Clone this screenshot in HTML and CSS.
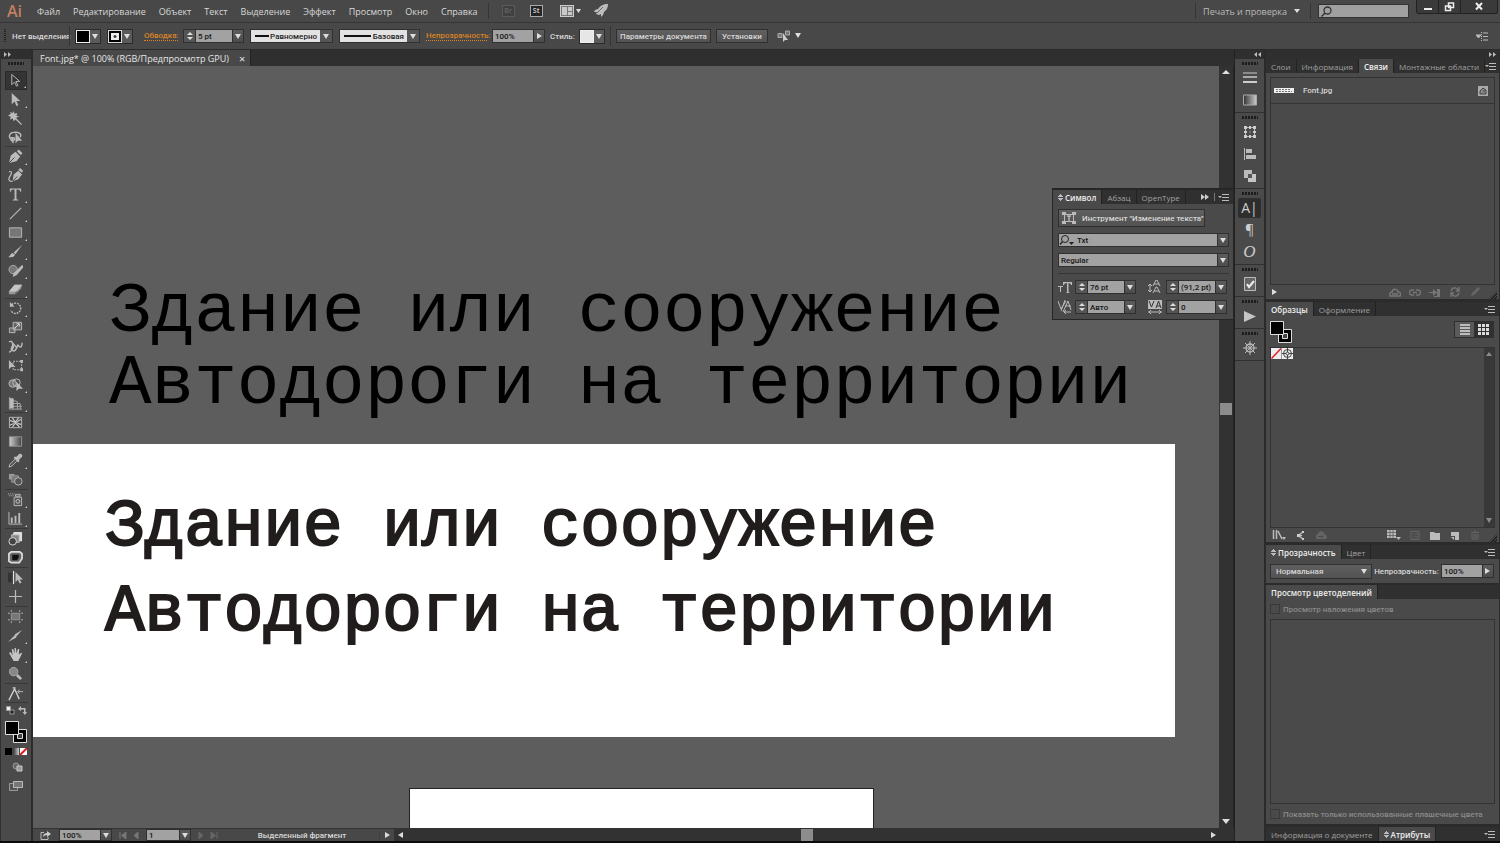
FILE: index.html
```html
<!DOCTYPE html>
<html lang="ru">
<head>
    <meta charset="UTF-8">
    <title>Font.jpg</title>
    <link rel="stylesheet" href="styles.css">
</head>
<body>
<header class="menubar">
    <span class="logo">Ai</span>
    <nav class="menu">
        <a href="#">Файл</a><a href="#">Редактирование</a><a href="#">Объект</a><a href="#">Текст</a><a href="#">Выделение</a><a href="#">Эффект</a><a href="#">Просмотр</a><a href="#">Окно</a><a href="#">Справка</a>
    </nav>
    <i class="vline"></i>
    <button class="app off">Br</button>
    <button class="app">St</button>
    <button class="plain arrange" aria-label="Упорядочить документы">
        <svg width="21" height="12" viewBox="0 0 21 12"><rect x=".5" y=".5" width="13" height="11" fill="#777" stroke="#ccc"/><path d="M2 2h5v8H2zM8 2h4v4H8zM8 7h4v3H8z" fill="#c8c8c8"/><path d="M16 4h5l-2.500 4z" fill="#ddd"/></svg>
    </button>
    <button class="plain" aria-label="Производительность">
        <svg width="15" height="14" viewBox="0 0 15 14"><path d="M14 0C9 0 6 2 4 5L1 6 0 8l3 0-1 2 3 1 2-1v3l2-2 1-3c3-2 4-5 4-8z" fill="#bcbcbc"/><path d="M3 9l6-6" stroke="#666"/></svg>
    </button>
    <div class="grow"></div>
    <i class="vline"></i>
    <button class="plain workspace">Печать и проверка <i class="down small"></i></button>
    <i class="vline"></i>
    <label class="search">
        <svg width="11" height="11" viewBox="0 0 11 11"><circle cx="6.500" cy="4.500" r="3.500" fill="none" stroke="#333" stroke-width="1.300"/><path d="M4 7L.5 10.500" stroke="#333" stroke-width="1.500"/></svg>
        <input type="text" aria-label="Поиск">
    </label>
    <div class="window">
        <button aria-label="Свернуть"><svg width="10" height="10"><path d="M1 6h8v2H1z" fill="#eee"/></svg></button>
        <button aria-label="Развернуть"><svg width="11" height="10"><path d="M4.500 1h5v4.500h-5zM1.500 4h5v4.500h-5z" fill="#333" stroke="#eee" stroke-width="1.500"/></svg></button>
        <button class="close" aria-label="Закрыть"><svg width="10" height="10"><path d="M2 1l6 6.500M8 1L2 7.500" stroke="#eee" stroke-width="2"/></svg></button>
    </div>
</header>

<section class="control">
    <i class="grip-v"></i>
    <span class="none">Нет выделения</span>
    <i class="vline"></i>
    <button class="swatch fill"><b></b><i class="down"></i></button>
    <button class="swatch stroke"><b></b><i class="down"></i></button>
    <a class="orange w-stroke" href="#">Обводка:</a>
    <div class="combo gap-r">
        <button class="spin" aria-label="Шаг"><i class="up"></i><i class="down small"></i></button>
        <input class="w36" type="text" value="5 pt" aria-label="Толщина">
        <button class="arrow" aria-label="Список"><i class="down"></i></button>
    </div>
    <div class="pick gap-r"><select aria-label="Профиль"><option>Равномерно</option></select><i class="line short"></i><i class="cell"><i class="down"></i></i></div>
    <div class="pick gap-r narrow"><select aria-label="Кисть"><option>Базовая</option></select><i class="line"></i><i class="cell"><i class="down"></i></i></div>
    <a class="orange w-opacity" href="#">Непрозрачность:</a>
    <div class="combo">
        <input class="w40" type="text" value="100%" aria-label="Непрозрачность">
        <button class="arrow" aria-label="Ползунок"><i class="right"></i></button>
    </div>
    <span class="style-label">Стиль:</span>
    <button class="swatch light"><b></b><i class="down"></i></button>
    <i class="vline"></i>
    <button class="btn w-doc">Параметры документа</button>
    <button class="btn w-set">Установки</button>
    <button class="plain select-same" aria-label="Выделить похожие">
        <svg width="25" height="12" viewBox="0 0 25 12"><path d="M1 3.500h4v4H1zM8.500 1h4v4h-4z" fill="#777" stroke="#aaa"/><path d="M6 3v9l2-2 3 0z" fill="#ccc"/><path d="M18 3h6l-3 5z" fill="#ddd"/></svg>
    </button>
    <div class="grow"></div>
    <button class="plain bar-menu" aria-label="Меню панели"><svg width="12" height="9"><path d="M0 3h5L2.500 6zM7 1h5M7 4.500h5M7 8h5" fill="#bbb" stroke="#bbb"/><path d="M5.500 0v9" stroke="#bbb" stroke-dasharray="1 1"/></svg></button>
</section>

<main class="workspace-area">
    <aside class="tools">
        <div class="dock-head"><svg width="7" height="5"><path d="M0 0l3 2.500L0 5zM4 0l3 2.500L4 5z" fill="#bbb"/></svg></div>
        <i class="grip"></i>
        <div class="group">
            <button class="tool on more"><svg viewBox="0 0 16 16"><path d="M4 1.500v11l3-3 2 4.500 1.500-.7-2-4.300h4z" fill="#333" stroke="#bbb"/></svg></button>
            <button class="tool more"><svg viewBox="0 0 16 16"><path d="M4 1v12l3-3 2 5 2-1-2-4.500h4z" fill="#bbb"/></svg></button>
            <button class="tool"><svg viewBox="0 0 16 16"><path d="M6 0l1 3 3-1-1 3 3 1-3 1 0 1 6 6-1 1-6-6-2 2-1-3-3 1 1-3-3-1 3-2-1-2 3 1z" fill="#bbb"/></svg></button>
            <button class="tool"><svg viewBox="0 0 16 16"><path d="M4 10C0 8 1 3 6 2.500c6-.8 9 2 7 5M5 8c-3 1-2 5 1 3s-1-4-1-2c0 3 1 3 0 5" fill="none" stroke="#bbb" stroke-width="1.500"/><path d="M8 3v11l2.500-2.500H15z" fill="#bbb"/></svg></button>
        </div>
        <div class="group">
            <button class="tool more"><svg viewBox="0 0 16 16"><path d="M1 15l2-8 5-4 5 5-4 5z" fill="#bbb"/><path d="M9.500 2.500l2-2 4 4-2 2z" fill="#bbb"/><path d="M1 15l6-6" stroke="#444"/></svg></button>
            <button class="tool"><svg viewBox="0 0 16 16"><path d="M5 14l1-7 5-4 4 4-4 5z" fill="#bbb"/><path d="M11 2l2-2 3 3-1 2z" fill="#bbb"/><path d="M5 14l5-5" stroke="#444"/><path d="M1 4c4-1 3 2 1 5s-1 6 3 5" fill="none" stroke="#bbb" stroke-width="1.300"/></svg></button>
            <button class="tool more"><svg viewBox="0 0 16 16"><path d="M2 1.500h12V5h-1c0-2-1-2.300-4-2.300V13l2 .5v1H5v-1l2-.5V2.700C4 2.700 3 3 3 5H2z" fill="#bbb"/></svg></button>
            <button class="tool more"><svg viewBox="0 0 16 16"><path d="M2 14L14 2" stroke="#bbb" stroke-width="1.200"/></svg></button>
            <button class="tool more"><svg viewBox="0 0 16 16"><path d="M1.500 3h13v10h-13z" fill="#777" stroke="#bbb"/></svg></button>
            <button class="tool more"><svg viewBox="0 0 16 16"><path d="M15 1L8 11 6 9zM5 9.500l2.500 2C6 15 3 14 0 14c3-1 2-4 5-4.500z" fill="#bbb"/></svg></button>
            <button class="tool more"><svg viewBox="0 0 16 16"><circle cx="5.500" cy="7" r="4.500" fill="#777" stroke="#aaa"/><path d="M15 2l2 2-8 9-4 2 1-4z" fill="#bbb"/></svg></button>
            <button class="tool more"><svg viewBox="0 0 16 16"><path d="M1 10l6-7h8l-1 4-6 6H1z" fill="#999"/><path d="M1 10l6-7h8l-6 7z" fill="#c5c5c5"/><path d="M9 10l-1 3" stroke="#555"/></svg></button>
        </div>
        <div class="group">
            <button class="tool more"><svg viewBox="0 0 16 16"><path d="M4 4a5.500 5.500 0 1 1-1 6" fill="none" stroke="#bbb" stroke-width="1.500" stroke-dasharray="2 1"/><path d="M2 1v5h5z" fill="#bbb"/></svg></button>
            <button class="tool more"><svg viewBox="0 0 16 16"><path d="M5.500 2.500h9v8h-9zM1.500 8.500h6v5h-6z" fill="#666" stroke="#bbb"/><path d="M7 9l5-5M9 4h3v3" stroke="#ddd" fill="none"/></svg></button>
            <button class="tool more"><svg viewBox="0 0 16 16"><path d="M1 3c4-2 5 3 3 6s3 6 5 1 1-4 3-2 3-1 3-4M3 2l7 8M1 14c2 0 5-4 5-7" fill="none" stroke="#bbb" stroke-width="1.500"/></svg></button>
            <button class="tool"><svg viewBox="0 0 16 16"><path d="M5.500 3.500h9v9h-9z" fill="none" stroke="#bbb" stroke-dasharray="2 1"/><path d="M1 2v10l2.500-2.500H8z" fill="#bbb"/><path d="M13 2h3v3h-3zM13 11h3v3h-3z" fill="#bbb"/></svg></button>
            <button class="tool more"><svg viewBox="0 0 16 16"><circle cx="5" cy="7" r="4" fill="#777" stroke="#bbb"/><circle cx="9" cy="6" r="4" fill="none" stroke="#bbb"/><path d="M9 5v10l2.500-2.500H16z" fill="#bbb"/></svg></button>
            <button class="tool more"><svg viewBox="0 0 16 16"><path d="M1.500 1v13H15M2 4l8 2v8M5 2v12M2 8h11v6M2 11h13" fill="none" stroke="#aaa"/><path d="M2 2l4 1v10H2z" fill="#bbb"/></svg></button>
        </div>
        <div class="group">
            <button class="tool"><svg viewBox="0 0 16 16"><path d="M1.500 2.500h13v11h-13z" fill="#444" stroke="#bbb"/><path d="M2 6c3 0 3 2 6 2s3-3 6-3M5 3c0 3 3 3 3 5s-3 3-3 5M11 3c0 2-3 3-3 5s3 2 4 5M2 11l4-2M10 9l4 1" fill="none" stroke="#ccc" stroke-width="1.300"/></svg></button>
            <button class="tool"><svg viewBox="0 0 16 16"><defs><linearGradient id="g"><stop stop-color="#ccc"/><stop offset="1" stop-color="#444"/></linearGradient><linearGradient id="g2"><stop stop-color="#333"/><stop offset="1" stop-color="#ccc"/></linearGradient></defs><path d="M1.500 3h13v10h-13z" fill="url(#g)" stroke="#999"/></svg></button>
            <button class="tool more"><svg viewBox="0 0 16 16"><path d="M8 6l2 2-6 6-3 1 1-3z" fill="#555" stroke="#bbb"/><path d="M7 4l2 0 3-3c2-1 4 1 3 3l-3 3v2l-1 1-5-5z" fill="#bbb"/></svg></button>
            <button class="tool"><svg viewBox="0 0 16 16"><path d="M1 2h6v6H1z" fill="#999"/><path d="M4 4h7v7H4z" fill="#777" stroke="#999"/><circle cx="11" cy="10" r="4" fill="#555" stroke="#bbb"/></svg></button>
        </div>
        <div class="group loose">
            <button class="tool more"><svg viewBox="0 0 16 16"><path d="M6.500 5.500h8v9h-8zM8 2.500h5v2H8z" fill="#555" stroke="#bbb"/><circle cx="10.500" cy="10" r="2" fill="none" stroke="#ccc"/><path d="M0 2h7M1 4h5" stroke="#bbb" stroke-dasharray="1 1"/></svg></button>
            <button class="tool more"><svg viewBox="0 0 16 16"><path d="M1 1v13h14" fill="none" stroke="#bbb"/><path d="M3 7h2v6H3zM7 5h2v8H7zM11 2h2v11h-2z" fill="#bbb"/></svg></button>
        </div>
        <div class="group loose">
            <button class="tool"><svg viewBox="0 0 16 16"><path d="M6 1h9v10h-4V5H5z" fill="#ddd"/><path d="M4 4h8v8H4z" fill="#888" stroke="#ccc"/><circle cx="5" cy="11" r="4" fill="#444" stroke="#ddd"/></svg></button>
            <button class="tool"><svg viewBox="0 0 16 16"><path d="M3.500 2h9l2.500 2v5l-3 4.500H3.500L1 12V4z" fill="#666" stroke="#ddd" stroke-width="1.800"/><path d="M4.500 5h7v3l-2 3h-5z" fill="#111"/></svg></button>
        </div>
        <div class="group loose">
            <button class="tool"><svg viewBox="0 0 16 16"><path d="M0 3h4v10H0z" fill="#333"/><path d="M6 1v14" stroke="#fff"/><path d="M8 2v11l2.500-2.500 2 4 2-1-2-3.500H16z" fill="#bbb"/></svg></button>
            <button class="tool"><svg viewBox="0 0 16 16"><path d="M8 1v14M1 8h14" stroke="#bbb" stroke-width="1.300"/></svg></button>
        </div>
        <div class="group loose">
            <button class="tool"><svg viewBox="0 0 16 16"><path d="M3.500 4.500h9v7h-9z" fill="#777" stroke="#999"/><path d="M3.500 1v2M12.500 1v2M3.500 13v2M12.500 13v2M0 4.500h2M14 4.500h2M0 11.500h2M14 11.500h2" stroke="#bbb"/></svg></button>
            <button class="tool more"><svg viewBox="0 0 16 16"><path d="M15 2L9 9 7 7zM8 7l1 3-9 5z" fill="#bbb"/></svg></button>
            <button class="tool more"><svg viewBox="0 0 16 16"><path d="M1 6l2-.5L5 9 4 2h1.500L7 7V1h1.500L9 7l1.500-5H12l-.5 6L14 6l1 1-4 8H6z" fill="#c5c5c5"/></svg></button>
            <button class="tool"><svg viewBox="0 0 16 16"><circle cx="6" cy="6" r="4.500" fill="#888" stroke="#aaa"/><path d="M9.500 9.500L14 14" stroke="#bbb" stroke-width="3"/></svg></button>
        </div>
        <div class="group loose">
            <button class="tool"><svg viewBox="0 0 16 16"><path d="M1 15L7 3l5 11M5 2l3 0" fill="none" stroke="#ccc" stroke-width="1.500"/><path d="M16 6h-5M12.500 4L10 6l2.500 2" fill="none" stroke="#bbb"/></svg></button>
        </div>
        <div class="group colors">
            <div class="mini">
                <svg width="9" height="9"><path d="M4 4h4v4H4z" fill="#222" stroke="#999"/><path d="M.5 .5h4v4h-4z" fill="#eee" stroke="#999"/></svg>
                <svg width="9" height="9"><path d="M3 0L0 3l3 2V3.500h3V6H4.500L7 9l2-3H7.500V2H3z" fill="#bbb"/></svg>
            </div>
            <svg width="22" height="22" viewBox="0 0 22 22"><path d="M8.500 8.500h13v13h-13z" fill="#000" stroke="#ddd"/><path d="M12.500 12.500h5v5h-5z" fill="#444" stroke="#ddd"/><path d="M.5 .5h13v13H.5z" fill="#000" stroke="#ddd"/></svg>
            <svg class="modes" width="22" height="7"><path d="M0 0h7v7H0z" fill="#000"/><path d="M8 0h6v7H8z" fill="url(#g2)"/><path d="M15 0h7v7h-7z" fill="#fff"/><path d="M15 7l7-7" stroke="#e02020" stroke-width="2"/></svg>
            <svg class="draw" width="12" height="10"><circle cx="4" cy="4" r="3" fill="#666" stroke="#999"/><path d="M5 4h5v5H5z" fill="#999" stroke="#ccc"/></svg>
            <svg width="14" height="12"><path d="M.5 3.500h8v7h-8z" fill="#555" stroke="#999"/><path d="M4.500 1.500h9v6h-9z" fill="#777" stroke="#bbb"/></svg>
        </div>
    </aside>

    <section class="document">
        <div class="doc-tabs"><div class="doc-tab">Font.jpg* @ 100% (RGB/Предпросмотр GPU)<button class="plain" aria-label="Закрыть">×</button></div></div>
        <div class="view">
            <div class="canvas">
                <p class="art top">Здание или сооружение<br>Автодороги на территории</p>
                <div class="board scan">
                    <p class="art">Здание или сооружение<br>Автодороги на территории</p>
                </div>
                <div class="board empty"></div>
            </div>
            <div class="scroll-v"><i class="up big"></i><i class="thumb"></i><i class="down big"></i></div>
        </div>
        <footer class="status">
            <svg class="share" width="11" height="9"><path d="M4 1.500H1v7h7V6" fill="none" stroke="#bbb"/><path d="M3 6c0-3 2-4 4-4V0l4 3-4 3V4C5 4 4 5 3 6z" fill="#ccc"/></svg>
            <div class="combo">
                <input class="w40" type="text" value="100%" aria-label="Масштаб">
                <button class="arrow" aria-label="Список"><i class="down"></i></button>
            </div>
            <svg class="nav" width="20" height="7"><path d="M1 0v7M7 0L2.500 3.500 7 7zM19 0l-4 3.500L19 7z" fill="#777" stroke="#777"/></svg>
            <div class="combo">
                <input class="w32" type="text" value="1" aria-label="Монтажная область">
                <button class="arrow" aria-label="Список"><i class="down"></i></button>
            </div>
            <svg class="nav" width="20" height="7"><path d="M1 0l4 3.500L1 7zM13 0l4.500 3.500L13 7zM19 0v7" fill="#666" stroke="#666"/></svg>
            <span class="state">Выделенный фрагмент</span>
            <i class="right"></i>
            <div class="scroll-h"><i class="left"></i><i class="thumb"></i><i class="right"></i></div>
        </footer>

        <section class="char">
            <div class="tabs">
                <span class="tab on"><i class="ud"></i>Символ</span><span class="tab">Абзац</span><span class="tab">OpenType</span>
                <div class="grow"></div>
                <svg width="8" height="6"><path d="M0 0l4 3-4 3zM4 0l4 3-4 3z" fill="#ccc"/></svg>
                <i class="vline"></i>
                <svg class="burger" width="11" height="7"><path d="M0 2h4L2 4z" fill="#bbb"/><path d="M4 .5h7M4 3.500h7M4 6.500h7" stroke="#bbb"/></svg>
            </div>
            <div class="char-body">
                <button class="btn touch"><svg width="14" height="12"><path d="M2.500 2.500h9v7h-9z" fill="none" stroke="#bbb"/><path d="M0 0h4v3H0zM10 0h4v3h-4zM0 9h4v3H0zM10 9h4v3h-4z" fill="#bbb"/><path d="M5 4h4M7 4v5" stroke="#ddd"/></svg>Инструмент "Изменение текста"</button>
                <div class="combo wide"><span class="lens"><svg width="15" height="10"><circle cx="6" cy="4" r="3.500" fill="none" stroke="#222"/><path d="M3.500 6.500L1 9.500" stroke="#222" stroke-width="1.300"/><path d="M10 7h5l-2.500 3z" fill="#222"/></svg></span><input type="text" value="Txt" aria-label="Шрифт"><button class="arrow" aria-label="Список"><i class="down"></i></button></div>
                <div class="combo wide"><input type="text" value="Regular" aria-label="Начертание"><button class="arrow" aria-label="Список"><i class="down"></i></button></div>
                <hr>
                <div class="pair">
                    <svg width="14" height="13"><path d="M5 1h9v3h-1c0-1-1-2-2.500-2v9l1.500 1H8l1-1V2C7 2 6 3 6 4H5zM0 5h5v1H3v5H2V6H0z" fill="#bbb"/></svg>
                    <div class="combo"><button class="spin" aria-label="Шаг"><i class="up"></i><i class="down small"></i></button><input class="w36" type="text" value="76 pt" aria-label="Размер"><button class="arrow" aria-label="Список"><i class="down"></i></button></div>
                    <svg width="14" height="14"><path d="M5 6l3-6h1l3 6M6 4h5M5 13l3-6h1l3 6M6 11h5M2 4v8M0 6l2-2 2 2M0 10l2 2 2-2" fill="none" stroke="#bbb"/></svg>
                    <div class="combo"><button class="spin" aria-label="Шаг"><i class="up"></i><i class="down small"></i></button><input class="w36" type="text" value="(91,2 pt)" aria-label="Интерлиньяж"><button class="arrow" aria-label="Список"><i class="down"></i></button></div>
                </div>
                <div class="pair">
                    <svg width="14" height="14"><path d="M0 1l3 8 5-8M5 12l5-11 3 9M7 6h6M7 0L3 11M6 12h7M8 10l-2 2 2 2" fill="none" stroke="#bbb"/></svg>
                    <div class="combo"><button class="spin" aria-label="Шаг"><i class="up"></i><i class="down small"></i></button><input class="w36" type="text" value="Авто" aria-label="Кернинг"><button class="arrow" aria-label="Список"><i class="down"></i></button></div>
                    <svg width="14" height="14"><path d="M0 0h14v9H0z" fill="#bbb"/><path d="M1 1l2.500 6L6 1M8 8l2.500-7L13 8M9 6h3" fill="none" stroke="#333"/><path d="M0 12h14M3 10l-2 2 2 2M11 10l2 2-2 2" fill="none" stroke="#bbb"/></svg>
                    <div class="combo"><button class="spin" aria-label="Шаг"><i class="up"></i><i class="down small"></i></button><input class="w36" type="text" value="0" aria-label="Трекинг"><button class="arrow" aria-label="Список"><i class="down"></i></button></div>
                </div>
            </div>
        </section>
    </section>

    <aside class="strip">
        <div class="dock-head end"><svg width="7" height="5"><path d="M3 0L0 2.500 3 5zM7 0L4 2.500 7 5z" fill="#bbb"/></svg></div>
        <div class="strip-group"><i class="grip"></i>
            <button><svg viewBox="0 0 14 14"><path d="M0 2h14" stroke="#ccc"/><path d="M0 6h14" stroke="#ccc" stroke-width="1.500"/><path d="M0 11h14" stroke="#ccc" stroke-width="2"/></svg></button>
            <button><svg viewBox="0 0 14 14"><path d="M.5 2h13v10H.5z" fill="url(#g2)" stroke="#aaa"/></svg></button>
        </div>
        <div class="strip-group"><i class="grip"></i>
            <button><svg viewBox="0 0 14 14"><path d="M2.500 2.500h9v9h-9z" fill="none" stroke="#bbb"/><path d="M1 1h3v3H1zM6 1h2v3H6zM10 1h3v3h-3zM1 6h3v2H1zM10 6h3v2h-3zM1 10h3v3H1zM6 10h2v3H6zM10 10h3v3h-3zM6.500 6.500h1v1h-1z" fill="#ccc"/></svg></button>
            <button><svg viewBox="0 0 14 14"><path d="M1.500 1v12" stroke="#bbb"/><path d="M3 2h6v4H3zM3 8h10v4H3z" fill="#bbb"/></svg></button>
            <button><svg viewBox="0 0 14 14"><path d="M1 1h8v8H1z" fill="#bbb"/><path d="M5 5h8v8H5z" fill="#c5c5c5"/><path d="M5 5h4v4H5z" fill="#555"/></svg></button>
        </div>
        <div class="strip-group"><i class="grip"></i>
            <button class="on"><span class="glyph">A|</span></button>
            <button><span class="glyph">¶</span></button>
            <button><span class="glyph italic">O</span></button>
        </div>
        <div class="strip-group"><i class="grip"></i>
            <button><svg viewBox="0 0 14 14"><path d="M1.500 .5h11v13h-11z" fill="#666" stroke="#bbb"/><path d="M4 7l2 3 5-6" fill="none" stroke="#eee" stroke-width="2"/></svg></button>
        </div>
        <div class="strip-group"><i class="grip"></i>
            <button><svg viewBox="0 0 14 14"><path d="M1 2l12 5.500L1 13z" fill="#c5c5c5"/></svg></button>
        </div>
        <div class="strip-group last"><i class="grip"></i>
            <button><svg viewBox="0 0 14 14"><circle cx="7" cy="7" r="4" fill="none" stroke="#bbb" stroke-width="1.300"/><path d="M7 0v14M0 7h14M2 2l10 10M12 2L2 12" stroke="#bbb"/></svg></button>
        </div>
    </aside>

    <aside class="panels">
        <div class="dock-head end"><svg width="7" height="5"><path d="M0 0l3 2.500L0 5zM4 0l3 2.500L4 5z" fill="#bbb"/></svg></div>
        <section class="panel links">
            <div class="tabs"><span class="tab">Слои</span><span class="tab">Информация</span><span class="tab on">Связи</span><span class="tab">Монтажные области</span><div class="grow"></div><svg class="burger" width="11" height="7"><path d="M0 2h4L2 4z" fill="#bbb"/><path d="M4 .5h7M4 3.500h7M4 6.500h7" stroke="#bbb"/></svg></div>
            <div class="box link-list">
                <div class="link-row">
                    <svg width="20" height="5"><path d="M0 0h20v5H0z" fill="#eee"/><path d="M2 1.500h15M2 3.500h16" stroke="#777" stroke-dasharray="2 1"/></svg>
                    <span>Font.jpg</span>
                    <svg width="10" height="10"><path d="M0 0h10v10H0z" fill="#aaa"/><path d="M2 5l3-3 3 2v4H2zM5 5h2" fill="#888" stroke="#444"/></svg>
                </div>
            </div>
            <div class="foot">
                <i class="right"></i><div class="grow"></div>
                <svg width="12" height="9"><path d="M1 8c-1-4 2-4 2-4 1-4 6-3 6 0 3 0 3 3 2 4zM3 6h6" fill="none" stroke="#777" stroke-width="1.500"/></svg>
                <svg width="12" height="9"><path d="M5 2H3a2 2 0 0 0 0 5h2M7 2h2a2 2 0 0 1 0 5H7M4 4.500h4" fill="none" stroke="#777" stroke-width="1.300"/></svg>
                <svg width="12" height="9"><path d="M0 4h4V1l4 3.500L4 8V5H0zM8 1h3v8H5V8h3z" fill="#777"/></svg>
                <svg width="12" height="10"><path d="M2 4c1-4 6-4 7-1M10 6c-1 4-6 4-7 1M10 0v4H7M2 10V6h3" fill="none" stroke="#777" stroke-width="1.300"/></svg>
                <svg width="12" height="10"><path d="M2 9l1-3 6-6 2 2-6 6z" fill="#666"/></svg>
                <i class="corner"></i>
            </div>
        </section>

        <section class="panel swatches">
            <div class="tabs"><span class="tab on">Образцы</span><span class="tab">Оформление</span><div class="grow"></div><svg class="burger" width="11" height="7"><path d="M0 2h4L2 4z" fill="#bbb"/><path d="M4 .5h7M4 3.500h7M4 6.500h7" stroke="#bbb"/></svg></div>
            <div class="swatch-top">
                <svg width="22" height="22" viewBox="0 0 22 22"><path d="M8.500 8.500h13v13h-13z" fill="#000" stroke="#ddd"/><path d="M12.500 12.500h5v5h-5z" fill="#444" stroke="#ddd"/><path d="M.5 .5h13v13H.5z" fill="#000" stroke="#ddd"/></svg>
                <div class="views">
                    <button aria-label="Список"><svg width="10" height="11"><path d="M0 1h10M0 4h10M0 7h10M0 10h10" stroke="#ddd" stroke-width="1.500"/></svg></button><button class="on" aria-label="Миниатюры"><svg width="11" height="11"><path d="M0 0h3v3H0zM4 0h3v3H4zM8 0h3v3H8zM0 4h3v3H0zM4 4h3v3H4zM8 4h3v3H8zM0 8h3v3H0zM4 8h3v3H4zM8 8h3v3H8z" fill="#ddd"/></svg></button>
                </div>
            </div>
            <div class="box swatch-list">
                <svg width="22" height="11"><path d="M0 0h22v11H0z" fill="#eee"/><path d="M.5 10.500L10 .5" stroke="#e02020" stroke-width="1.500"/><path d="M10.500 0v11" stroke="#999"/><circle cx="16.500" cy="5.500" r="4" fill="none" stroke="#444"/><path d="M16.500 0v11M11 5.500h11" stroke="#444"/><circle cx="16.500" cy="5.500" r="1.500" fill="#eee" stroke="#444"/></svg>
                <div class="bar"><i class="up dim"></i><i class="down dim"></i></div>
            </div>
            <div class="foot">
                <svg width="15" height="10"><path d="M1.500 0v9M4.500 0v9M6 1l4 8" stroke="#bbb" stroke-width="1.500"/><path d="M10 7h4l-2 3z" fill="#bbb"/></svg>
                <svg width="12" height="9"><path d="M8 1L3 4.500 8 8M3 4.500h4" fill="none" stroke="#bbb" stroke-width="1.300"/><path d="M7 0h2v2H7zM7 7h2v2H7zM2 3h3v3H2z" fill="#ccc"/></svg>
                <svg width="12" height="9"><path d="M2 8C-1 5 2 3 3 3c1-4 6-3 6 0 3 0 4 5 1 5z" fill="#666"/><path d="M3 5.500h5M6 3.500l2 2-2 2" fill="none" stroke="#4a4a4a"/></svg>
                <div class="grow"></div>
                <svg width="14" height="10"><path d="M0 0h9v8H0z" fill="#bbb"/><path d="M3 0v8M6 0v8M0 2.500h9M0 5.500h9" stroke="#555" stroke-width=".7"/><path d="M9 7h5l-2.500 3z" fill="#bbb"/></svg>
                <svg width="12" height="9"><path d="M2 .5h8v8H2zM4 3h1M6 3h3M4 6h1M6 6h3" fill="none" stroke="#666"/></svg>
                <svg width="12" height="9"><path d="M1 1h4l1 1h5v7H1z" fill="#bbb"/></svg>
                <svg width="12" height="9"><path d="M2 1h8v8H6V5H2z" fill="#bbb"/><path d="M2 6h3v3z" fill="#bbb"/></svg>
                <svg width="12" height="10"><path d="M2 2.500h8M5 1h2M3 4v5h6V4M5 4v4M7 4v4" fill="none" stroke="#666"/></svg>
                <i class="corner"></i>
            </div>
        </section>

        <section class="panel transparency">
            <div class="tabs"><span class="tab on"><i class="ud"></i>Прозрачность</span><span class="tab">Цвет</span><div class="grow"></div><svg class="burger" width="11" height="7"><path d="M0 2h4L2 4z" fill="#bbb"/><path d="M4 .5h7M4 3.500h7M4 6.500h7" stroke="#bbb"/></svg></div>
            <div class="trans-row">
                <div class="mode"><select aria-label="Режим наложения"><option>Нормальная</option></select><i class="down"></i></div>
                <label for="op">Непрозрачность:</label>
                <div class="combo"><input id="op" class="w40" type="text" value="100%"><button class="arrow" aria-label="Ползунок"><i class="right"></i></button></div>
            </div>
        </section>

        <section class="panel separations">
            <div class="tabs"><span class="tab on">Просмотр цветоделений</span></div>
            <label class="check"><input type="checkbox" disabled>Просмотр наложения цветов</label>
            <div class="box ink-list"></div>
            <label class="check"><input type="checkbox" disabled>Показать только использованные плашечные цвета</label>
        </section>

        <section class="panel attrs">
            <div class="tabs"><span class="tab">Информация о документе</span><span class="tab on"><i class="ud"></i>Атрибуты</span><div class="grow"></div><svg class="burger" width="11" height="7"><path d="M0 2h4L2 4z" fill="#bbb"/><path d="M4 .5h7M4 3.500h7M4 6.500h7" stroke="#bbb"/></svg></div>
        </section>
    </aside>
</main>
</body>
</html>
```
FILE: styles.css
```css
*{
    box-sizing: border-box;
}
body{
    margin: 0;
    height: 100vh;
    display: flex;
    flex-direction: column;
    overflow: hidden;
    background: #484848;
    border-bottom: 2px solid #0c0a0b;
    color: #d8d8d8;
    font-family: Roboto, "Open Sans", sans-serif;
    font-size: 8px;
    font-weight: 500;
}
button, input, select{
    margin: 0;
    padding: 0;
    border: 0;
    border-radius: 0;
    font: inherit;
    color: inherit;
    background: none;
}
a{
    color: inherit;
    text-decoration: none;
}
svg{
    display: block;
    flex: none;
}
i{
    display: block;
    flex: none;
}
.grow{
    flex: 1;
}
.vline{
    width: 1px;
    height: 20px;
    background: #353535;
}
.plain{
    display: flex;
    align-items: center;
}

/* arrows */
.down, .up, .right, .left{
    width: 0;
    height: 0;
    border: 3px solid transparent;
}
.down{
    border-top: 5px solid #ddd;
    border-bottom: 0;
}
.up{
    border-bottom: 4px solid #ddd;
    border-top: 0;
}
.down.small{
    border-top-width: 4px;
}
.right{
    border-left: 5px solid #ddd;
    border-right: 0;
}
.left{
    border-right: 5px solid #ddd;
    border-left: 0;
}
.big{
    border-left-width: 4px;
    border-right-width: 4px;
}
.dim{
    opacity: .5;
}
.ud{
    width: 5px;
    height: 7px;
    margin-right: 2px;
    background: conic-gradient(from 135deg at 50% 0, #bbb 90deg, transparent 0) 0 0 / 5px 3px no-repeat,
        conic-gradient(from -45deg at 50% 100%, #bbb 90deg, transparent 0) 0 4px / 5px 3px no-repeat;
    transform: rotate(180deg);
}

/* menu bar */
.menubar{
    display: flex;
    align-items: center;
    height: 23px;
    padding-left: 7px;
    border-bottom: 1px solid #353535;
    font-family: "Open Sans", "Noto Sans", sans-serif;
    font-size: 9px;
    font-weight: 400;
}
.logo{
    width: 30px;
    color: #c08060;
    font-size: 16px;
    font-weight: 600;
    line-height: 20px;
}
.menu{
    display: flex;
    gap: 13px;
    margin-right: 10px;
}
.menubar .vline{
    height: 16px;
}
.app{
    width: 13px;
    height: 12px;
    margin-left: 13px;
    border: 1px solid #aaa;
    background: #252525;
    font-size: 7px;
    font-weight: 600;
    line-height: 10px;
}
.app + .app{
    margin-left: 15px;
}
.app.off{
    border-color: #5a5a5a;
    color: #666;
    background: #404040;
}
.arrange{
    margin: 0 13px 0 17px;
}
.workspace{
    gap: 7px;
    padding: 0 10px 0 7px;
    color: #bbb;
}
.search{
    display: flex;
    align-items: center;
    width: 91px;
    height: 14px;
    margin: 0 7px;
    padding: 0 2px;
    border: 1px solid #333;
    background: #a0a0a0;
}
.search input{
    width: 70px;
}
.window{
    display: flex;
    align-self: flex-start;
    margin-right: 2px;
    border: 1px solid #222;
    border-top: 0;
    border-radius: 0 0 3px 3px;
    background: #3a3a3a;
}
.window button{
    display: flex;
    justify-content: center;
    width: 22px;
    height: 13px;
    padding-top: 2px;
    border-right: 1px solid #222;
}
.window .close{
    width: 36px;
    border: 0;
}

/* control bar */
.control{
    display: flex;
    align-items: center;
    height: 27px;
    padding-left: 4px;
    border-bottom: 1px solid #2a2a2a;
}
.control > *{
    flex: none;
}
.control .grow{
    flex: 1;
}
.grip-v{
    width: 2px;
    height: 14px;
    background: repeating-linear-gradient(#222 0 1px, #484848 1px 2px);
}
.none{
    width: 57px;
    margin-left: 6px;
    white-space: nowrap;
}
.swatch{
    display: flex;
    align-items: center;
    gap: 2px;
    width: 26px;
    height: 15px;
    margin-left: 5px;
    border: 1px solid #2b2b2b;
    background: #5a5a5a;
}
.swatch b{
    width: 14px;
    height: 13px;
    border: 1px solid #eee;
    background: #000;
}
.swatch.stroke{
    margin-left: 6px;
}
.swatch.stroke b{
    border: 3px solid #000;
    outline: 1px solid #ddd;
    outline-offset: -1px;
    background: radial-gradient(#333 0 1px, #eee 2px);
}
.swatch.light b{
    background: #e6e6e6;
}
.orange{
    color: #dd8325;
    border-bottom: 1px dotted #dd8325;
    line-height: 9px;
    white-space: nowrap;
}
.w-stroke{
    width: 34px;
    margin: 0 5px 0 11px;
}
.w-opacity{
    width: 61px;
    margin-right: 5px;
}
.gap-r{
    margin-right: 6px;
}
.combo{
    display: flex;
    height: 14px;
    border: 1px solid #303030;
    background: #555;
}
.combo input{
    min-width: 0;
    padding: 0 2px;
    color: #161616;
    background: #a2a2a2;
}
.w36{
    width: 36px;
}
.w40{
    width: 40px;
}
.w32{
    width: 32px;
}
.arrow{
    display: flex;
    flex: none;
    align-items: center;
    justify-content: center;
    width: 11px;
    border-left: 1px solid #303030;
    background: linear-gradient(#5c5c5c, #4c4c4c);
}
.spin{
    display: flex;
    flex: none;
    flex-direction: column;
    align-items: center;
    justify-content: center;
    gap: 2px;
    width: 12px;
    border-right: 1px solid #303030;
}
.spin .up, .spin .down{
    border-left-width: 3px;
    border-right-width: 3px;
    border-top-width: 0;
    border-bottom-width: 3px;
}
.spin .down{
    border-top-width: 3px;
    border-bottom-width: 0;
}
.pick{
    position: relative;
    width: 83px;
    height: 14px;
    border: 1px solid #303030;
    background: #e2e2e2;
}
.pick.narrow{
    width: 81px;
}
.pick select, .mode select{
    width: 100%;
    height: 100%;
    appearance: none;
}
.pick select{
    padding-right: 15px;
    color: #222;
    text-align: right;
    text-align-last: right;
}
.line{
    position: absolute;
    left: 4px;
    top: 5px;
    width: 27px;
    height: 2px;
    background: #111;
}
.line.short{
    width: 14px;
}
.cell{
    position: absolute;
    right: 0;
    top: 0;
    width: 12px;
    height: 12px;
    padding: 4px 3px;
    background: #555;
}
.style-label{
    width: 25px;
    margin-left: 5px;
}
.btn{
    height: 14px;
    border: 1px solid #2f2f2f;
    background: linear-gradient(#606060, #525252);
    white-space: nowrap;
}
.w-doc{
    width: 95px;
    margin: 0 5px;
}
.w-set{
    width: 52px;
}
.select-same{
    margin-left: 9px;
}
.bar-menu{
    margin-right: 12px;
}
.control .swatch.light{
    margin: 0 5px 0 4px;
}

/* tools */
.workspace-area{
    display: flex;
    flex: 1;
    min-height: 0;
}
.tools{
    flex: none;
    width: 33px;
    border-left: 1px solid #303030;
    border-right: 2px solid #2b2b2b;
    background: #4a4a4a;
}
.dock-head{
    height: 9px;
    padding: 2px 3px;
    background: #2f2f2f;
}
.dock-head.end{
    display: flex;
    justify-content: flex-end;
}
.grip{
    width: 16px;
    height: 3px;
    margin: 3px auto 6px;
    background: repeating-linear-gradient(90deg, #1c1c1c 0 2px, #4a4a4a 2px 3px);
}
.group{
    margin: 0 3px 0 4px;
    box-shadow: 0 -1px #383838;
}
.grip + .group{
    box-shadow: none;
}
.loose{
    margin-top: 1px;
}
.tool{
    position: relative;
    display: block;
    width: 22px;
    height: 19px;
    padding: 2px 3px;
}
.tool svg{
    width: 15px;
    height: 15px;
}
.tool.on{
    border: 1px solid #2a2a2a;
    background: #343434;
    padding: 1px 2px;
}
.tool.more::after{
    content: "";
    position: absolute;
    right: 0;
    bottom: 1px;
    border: 1px solid #ccc;
    border-left-color: transparent;
    border-top-color: transparent;
}
.colors{
    padding: 3px 0;
}
.mini{
    display: flex;
    justify-content: space-between;
    margin-bottom: 6px;
    padding: 0 1px;
}
.modes{
    margin: 5px 0 7px;
}
.draw{
    margin: 0 0 8px 7px;
}
.draw + svg{
    margin-left: 4px;
}

/* document */
.document{
    position: relative;
    display: flex;
    flex: 1;
    flex-direction: column;
    min-width: 0;
}
.doc-tabs{
    display: flex;
    height: 16px;
    background: #2f2f2f;
}
.doc-tab{
    display: flex;
    align-items: center;
    gap: 10px;
    padding: 0 5px 0 7px;
    border-right: 1px solid #222;
    background: #484848;
    color: #e6e6e6;
    font-family: "Open Sans", "Noto Sans", sans-serif;
    font-size: 9px;
    font-weight: 400;
}
.doc-tab button{
    font-size: 11px;
}
.view{
    display: flex;
    flex: 1;
    min-height: 0;
}
.canvas{
    position: relative;
    flex: 1;
    overflow: hidden;
    background: #5d5d5d;
}
.art{
    margin: 0;
    color: #000;
    font-family: "Liberation Mono", monospace;
    font-size: 71px;
    font-weight: 400;
    line-height: 72px;
    white-space: pre;
}
.art.top{
    position: absolute;
    left: 76px;
    top: 210px;
}
.board{
    position: absolute;
    background: #fff;
}
.scan{
    left: 0;
    top: 378px;
    width: 1142px;
    height: 293px;
    padding: 41px 0 0 72px;
}
/* scanned lettering is heavier than the live text */
.scan .art{
    color: #211d1c;
    font-size: 66px;
    line-height: 85px;
    -webkit-text-stroke: 2px #211d1c;
}
.empty{
    left: 376px;
    top: 722px;
    width: 465px;
    height: 60px;
    border: 1px solid #222;
}
.scroll-v{
    display: flex;
    flex: none;
    flex-direction: column;
    align-items: center;
    justify-content: space-between;
    width: 15px;
    padding: 4px 0;
    border-right: 1px solid #222;
    background: #323232;
}
.thumb{
    width: 12px;
    height: 12px;
    background: #8c8c8c;
}
.scroll-v .thumb{
    margin-bottom: 76px;
}
.status{
    display: flex;
    align-items: center;
    height: 13px;
    border-top: 1px solid #333;
}
.status > *{
    flex: none;
}
.share{
    margin: 0 8px 0 7px;
}
.status .combo{
    height: 12px;
}
.nav{
    margin: 0 7px;
}
.state{
    width: 155px;
    text-align: center;
    border-right: 1px solid #404040;
}
.status > .right{
    margin: 0 4px 0 5px;
}
.status > .scroll-h{
    display: flex;
    flex: 1;
    align-items: center;
    justify-content: space-between;
    height: 12px;
    padding: 0 18px 0 4px;
    background: #323232;
}

/* floating character panel */
.char{
    position: absolute;
    right: 0;
    top: 138px;
    width: 182px;
    border: 1px solid #262626;
    border-top-width: 2px;
    background: #4a4a4a;
}
.tabs{
    display: flex;
    align-items: center;
    height: 14px;
    padding-right: 4px;
    background: #303030;
}
.tab{
    display: flex;
    flex: none;
    align-items: center;
    height: 14px;
    padding: 0 5px;
    border-right: 1px solid #222;
    color: #a0a0a0;
    font-family: "Open Sans", "Noto Sans", sans-serif;
    font-weight: 400;
    white-space: nowrap;
}
.tab.on{
    color: #eee;
    background: #4a4a4a;
    font-weight: 600;
}
.char .tabs .vline{
    height: 8px;
    margin: 0 3px 0 5px;
    background: #777;
}
.char-body{
    display: flex;
    flex-direction: column;
    gap: 6px;
    padding: 5px 4px 5px 5px;
}
.touch{
    display: flex;
    align-items: center;
    gap: 6px;
    width: 147px;
    height: 18px;
    padding-left: 3px;
}
.wide input{
    flex: 1;
}
.lens{
    display: flex;
    align-items: center;
    width: 16px;
    background: #a2a2a2;
}
hr{
    width: 100%;
    margin: 0;
    border: 0;
    border-top: 1px solid #363636;
}
.pair{
    display: grid;
    grid-template-columns: 17px 73px 18px 62px;
    align-items: center;
}
.pair .combo{
    width: 61px;
}

/* icon strip */
.strip{
    flex: none;
    width: 30px;
    border-left: 1px solid #222;
    background: #4a4a4a;
}
.strip-group{
    border-bottom: 1px solid #303030;
}
.strip-group .grip{
    margin: 0 auto;
    transform: translateY(3px);
}
.strip-group .grip + button{
    margin-top: 6px;
}
.strip button{
    display: flex;
    align-items: center;
    justify-content: center;
    width: 23px;
    height: 20px;
    margin: 2px auto 2px 3px;
}
.strip svg{
    width: 14px;
    height: 14px;
}
.strip .dock-head svg{
    width: 7px;
    height: 5px;
}
.strip .on{
    border-radius: 2px;
    background: #2e2e2e;
}
.glyph{
    color: #ccc;
    font-family: "Open Sans", sans-serif;
    font-size: 14px;
    line-height: 16px;
}
.italic{
    font-family: "Liberation Serif", serif;
    font-size: 17px;
    font-style: italic;
    font-weight: 400;
}

/* panels */
.panels{
    display: flex;
    flex: none;
    flex-direction: column;
    width: 236px;
    border-left: 2px solid #2b2b2b;
    border-right: 1px solid #2b2b2b;
}
.panel{
    display: flex;
    flex: none;
    flex-direction: column;
    border-bottom: 3px solid #2b2b2b;
    background: #4a4a4a;
}
.box{
    margin: 0 4px;
    border: 1px solid #333;
}
.link-list{
    height: 208px;
    margin-top: 4px;
}
.link-row{
    display: flex;
    align-items: center;
    gap: 9px;
    height: 26px;
    padding: 0 6px 0 3px;
    border-bottom: 1px solid #353535;
}
.link-row span{
    flex: 1;
}
.foot{
    display: flex;
    align-items: center;
    gap: 8px;
    height: 14px;
    padding: 0 2px 0 6px;
}
.corner{
    align-self: flex-end;
    width: 8px;
    height: 8px;
    background: repeating-linear-gradient(135deg, transparent 0 1px, #222 1px 2px);
    clip-path: polygon(100% 0, 100% 100%, 0 100%);
}
.swatch-top{
    display: flex;
    justify-content: space-between;
    height: 31px;
    padding: 5px 5px 0 4px;
}
.views{
    display: flex;
    height: 17px;
    border: 1px solid #303030;
}
.views button{
    display: flex;
    align-items: center;
    justify-content: center;
    width: 19px;
    background: #5a5a5a;
}
.views .on{
    background: #303030;
}
.swatch-list{
    display: flex;
    justify-content: space-between;
    height: 181px;
}
.bar{
    display: flex;
    flex-direction: column;
    align-items: center;
    justify-content: space-between;
    width: 10px;
    padding: 4px 0;
    background: #383838;
}
.panels .transparency{
    border-bottom-width: 2px;
}
.trans-row{
    display: flex;
    align-items: center;
    justify-content: space-between;
    height: 24px;
    padding: 0 5px 0 4px;
}
.mode{
    position: relative;
    width: 102px;
    height: 15px;
    border: 1px solid #303030;
    background: linear-gradient(#606060, #525252);
}
.mode select{
    padding-left: 5px;
}
.mode .down{
    position: absolute;
    right: 4px;
    top: 4px;
}
.panels .separations{
    flex: 1;
    min-height: 0;
}
.check{
    display: flex;
    align-items: center;
    gap: 3px;
    height: 20px;
    padding-left: 4px;
    color: #8a8a8a;
    white-space: nowrap;
}
.check input{
    appearance: none;
    width: 10px;
    height: 10px;
    border: 1px solid #3a3a3a;
}
.ink-list{
    flex: 1;
}
.panels .attrs{
    border: 0;
}
```
